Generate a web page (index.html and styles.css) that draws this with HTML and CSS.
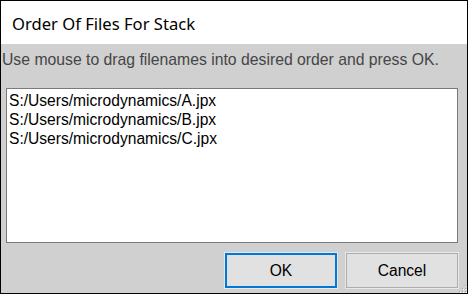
FILE: index.html
```html
<!DOCTYPE html>
<html>
<head>
<meta charset="utf-8">
<link rel="stylesheet" href="styles.css">
</head>
<body>
<div class="window">
  <div class="titlebar">Order Of Files For Stack</div>
  <div class="content">
    <div class="hint">Use mouse to drag filenames into desired order and press OK.</div>
    <div class="listbox">
      <div class="item">S:/Users/microdynamics/A.jpx</div>
      <div class="item">S:/Users/microdynamics/B.jpx</div>
      <div class="item">S:/Users/microdynamics/C.jpx</div>
    </div>
    <div class="buttons">
      <button class="btn btn-default">OK</button>
      <button class="btn">Cancel</button>
    </div>
    <svg class="grip" width="8" height="8" viewBox="0 0 8 8">
      <rect x="6" y="0" width="1" height="1" fill="#a8a8a8"/>
      <rect x="3" y="3" width="1" height="1" fill="#a8a8a8"/>
      <rect x="6" y="3" width="1" height="1" fill="#a8a8a8"/>
      <rect x="0" y="6" width="1" height="1" fill="#a8a8a8"/>
      <rect x="3" y="6" width="1" height="1" fill="#a8a8a8"/>
      <rect x="6" y="6" width="1" height="1" fill="#a8a8a8"/>
      <rect x="7" y="1" width="1" height="1" fill="#ffffff"/>
      <rect x="4" y="4" width="1" height="1" fill="#ffffff"/>
      <rect x="7" y="4" width="1" height="1" fill="#ffffff"/>
      <rect x="1" y="7" width="1" height="1" fill="#ffffff"/>
      <rect x="4" y="7" width="1" height="1" fill="#ffffff"/>
      <rect x="7" y="7" width="1" height="1" fill="#ffffff"/>
    </svg>
  </div>
</div>
</body>
</html>
```
FILE: styles.css
```css
html, body {
  margin: 0;
  padding: 0;
  background: #ffffff;
}
.window {
  width: 468px;
  height: 294px;
  box-sizing: border-box;
  border: 1px solid #000000;
  display: flex;
  flex-direction: column;
  overflow: hidden;
}
.titlebar {
  height: 43px;
  flex: 0 0 43px;
  background: #ffffff;
  display: flex;
  align-items: center;
  padding-left: 11px;
  padding-top: 1px;
  box-sizing: border-box;
  font-family: "Noto Sans", "Open Sans", sans-serif;
  font-size: 16.6px;
  color: #000000;
}
.content {
  position: relative;
  flex: 1;
  background: #d0d0d0;
  display: flex;
  flex-direction: column;
  font-family: "Liberation Sans", Arial, sans-serif;
  font-size: 15.6px;
}
.hint {
  margin-top: 7px;
  height: 18px;
  line-height: 18px;
  padding-left: 1px;
  font-size: 15.75px;
  color: #454545;
  white-space: nowrap;
}
.listbox {
  margin: 19px 9px 0 5px;
  height: 155px;
  box-sizing: border-box;
  border: 1px solid #7a7a7a;
  background: #ffffff;
  padding: 2px 2px;
  color: #000000;
}
.item {
  height: 19px;
  line-height: 19px;
  white-space: nowrap;
}
.buttons {
  margin-top: 10px;
  margin-right: 9px;
  display: flex;
  justify-content: flex-end;
  gap: 9px;
}
.btn {
  width: 112px;
  height: 35px;
  box-sizing: border-box;
  background: #e1e1e1;
  border: 1px solid #adadad;
  box-shadow: inset 0 0 0 1px #e1e1e1;
  font-family: "Liberation Sans", Arial, sans-serif;
  font-size: 15.6px;
  color: #000000;
  padding: 0;
  margin: 0;
  outline: 1px solid #e8e8e8;
}
.btn-default {
  border: 2px solid #0078d7;
}
.grip {
  position: absolute;
  right: 0;
  bottom: 0;
}
```
